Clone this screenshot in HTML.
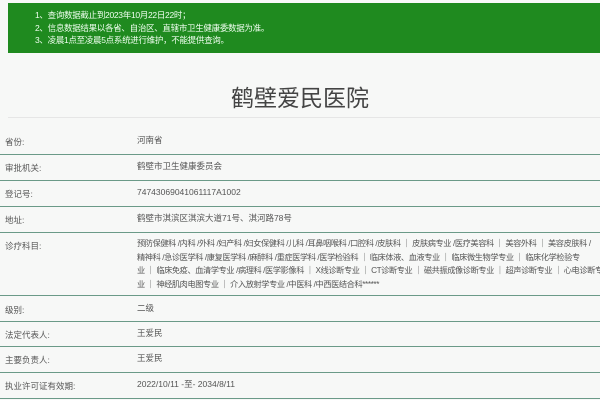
<!DOCTYPE html>
<html><head><meta charset="utf-8"><style>
body{margin:0;width:600px;height:400px;background:#f7f8f7;font-family:"Liberation Sans","Noto Sans CJK SC",sans-serif;overflow:hidden;position:relative;color:#555}
.banner{position:absolute;left:8px;top:3px;width:592px;height:50px;background:#1f8a1f;color:#f0fff0;font-size:8.5px;line-height:12.5px;box-sizing:border-box;padding:6px 0 0 27px;letter-spacing:-0.3px}
h1{position:absolute;top:79px;left:0;width:600px;text-align:center;font-weight:normal;font-size:23px;color:#444;margin:0}
.sep{position:absolute;left:8px;right:0;top:117px;border-top:1px solid #e6e6e6}
.row{position:absolute;left:0;width:600px;border-bottom:1.5px solid #6b9a88;font-size:8.5px}
.l{position:absolute;left:5px}
.v{position:absolute;left:137px;width:462px;line-height:13.5px}
.dz{font-size:8.2px;letter-spacing:-0.4px;white-space:nowrap}
</style></head><body>
<div class="banner">1、查询数据截止到2023年10月22日22时；<br>2、信息数据结果以各省、自治区、直辖市卫生健康委数据为准。<br>3、凌晨1点至凌晨5点系统进行维护，不能提供查询。</div>
<h1>鹤壁爱民医院</h1>
<div class="sep"></div>
<div class="row" style="top:128px;height:26px"><span class="l" style="top:8px">省份:</span><span class="v" style="top:6px">河南省</span></div>
<div class="row" style="top:155px;height:25px"><span class="l" style="top:7px">审批机关:</span><span class="v" style="top:5px">鹤壁市卫生健康委员会</span></div>
<div class="row" style="top:181px;height:25px"><span class="l" style="top:7px">登记号:</span><span class="v" style="top:5px">74743069041061117A1002</span></div>
<div class="row" style="top:207px;height:25px"><span class="l" style="top:7px">地址:</span><span class="v" style="top:5px">鹤壁市淇滨区淇滨大道71号、淇河路78号</span></div>
<div class="row" style="top:233px;height:62px"><span class="l" style="top:7px">诊疗科目:</span><span class="v dz" style="top:4px">预防保健科 /内科 /外科 /妇产科 /妇女保健科 /儿科 /耳鼻咽喉科 /口腔科 /皮肤科 ｜ 皮肤病专业 /医疗美容科 ｜ 美容外科 ｜ 美容皮肤科 /<br>精神科 /急诊医学科 /康复医学科 /麻醉科 /重症医学科 /医学检验科 ｜ 临床体液、血液专业 ｜ 临床微生物学专业 ｜ 临床化学检验专<br>业 ｜ 临床免疫、血清学专业 /病理科 /医学影像科 ｜ X线诊断专业 ｜ CT诊断专业 ｜ 磁共振成像诊断专业 ｜ 超声诊断专业 ｜ 心电诊断专<br>业 ｜ 神经肌肉电图专业 ｜ 介入放射学专业 /中医科 /中西医结合科******</span></div>
<div class="row" style="top:296px;height:25px"><span class="l" style="top:8px">级别:</span><span class="v" style="top:6px">二级</span></div>
<div class="row" style="top:322px;height:24px"><span class="l" style="top:7px">法定代表人:</span><span class="v" style="top:5px">王爱民</span></div>
<div class="row" style="top:347px;height:25px"><span class="l" style="top:7px">主要负责人:</span><span class="v" style="top:5px">王爱民</span></div>
<div class="row" style="top:373px;height:25px"><span class="l" style="top:7px">执业许可证有效期:</span><span class="v" style="top:5px">2022/10/11 -至- 2034/8/11</span></div>
</body></html>
